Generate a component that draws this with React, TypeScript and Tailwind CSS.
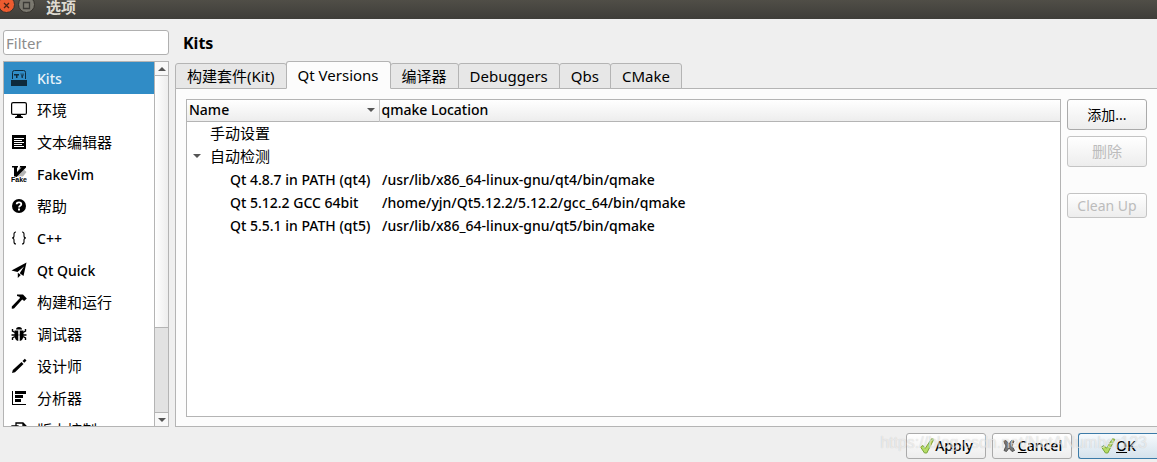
import { useState } from "react";
import type { ReactNode } from "react";

const latin = "font-['Noto_Sans','Noto_Sans_CJK_SC',sans-serif]";

function Icon({ children }: { children: ReactNode }) {
  return (
    <svg viewBox="0 0 16 16" className="size-4 shrink-0" fill="currentColor" aria-hidden="true">
      {children}
    </svg>
  );
}

const categories: { label: string; cjk?: boolean; icon: ReactNode }[] = [
  {
    label: "Kits",
    icon: (
      <>
        <path d="M1.500 9V2.500Q1.500 .5 3.500 .5h9q2 0 2 2V9" fill="none" stroke="currentColor" />
        <path d="M0 10h16v6H0zM3 4h5v1.500H6.500V8H5V5.500H3zM9.500 3.500h1v2h1v-2h1v2l-.7 1V8h-1.200V7z" />
      </>
    ),
  },
  {
    label: "环境",
    cjk: true,
    icon: (
      <>
        <rect x=".6" y=".6" width="14.800" height="11.800" rx="1.500" fill="none" stroke="currentColor" strokeWidth="1.200" />
        <path d="M6 13h4v1l2 1v1H4v-1l2-1z" />
      </>
    ),
  },
  {
    label: "文本编辑器",
    cjk: true,
    icon: (
      <>
        <path d="M1 1h14v14H1z" />
        <path d="M3 4.500h10M3 6.500h8M3 8.500h10M3 10.500h8M3 12.500h10" stroke="white" />
      </>
    ),
  },
  {
    label: "FakeVim",
    icon: (
      <>
        <path d="M9 0 15.500 6 12 10.500H5z" fill="#b5b5b5" />
        <path d="M1 0h6v1.500H6V6l4.500-4.500H9V0h6v1.500L5.500 11H3V1.500H1z" />
        <text
          x="8"
          y="16"
          fontSize="7"
          textAnchor="middle"
          className="font-['Liberation_Sans',sans-serif] font-bold"
          stroke="white"
          strokeWidth="1"
          paintOrder="stroke"
        >
          Fake
        </text>
      </>
    ),
  },
  {
    label: "帮助",
    cjk: true,
    icon: (
      <>
        <circle cx="8" cy="8" r="7" />
        <path
          d="M5.700 6.300Q5.700 4.300 8 4.300t2.300 1.900C10.300 7.800 8 7.600 8 9.500"
          fill="none"
          stroke="white"
          strokeWidth="1.800"
        />
        <path d="M7 10.500h2v2H7z" fill="white" />
      </>
    ),
  },
  {
    label: "C++",
    icon: (
      <path
        d="M5 2Q3 2 3 4v2q0 2-2 2 2 0 2 2v2q0 2 2 2M11 2q2 0 2 2v2q0 2 2 2-2 0-2 2v2q0 2-2 2"
        fill="none"
        stroke="currentColor"
        strokeWidth="1.100"
      />
    ),
  },
  {
    label: "Qt Quick",
    icon: <path d="M15.500.5 12.500 14 8.700 11.200 13 4.500 6.500 10 .5 8.500zM6.800 10.800l3 2.200-3 3z" />,
  },
  {
    label: "构建和运行",
    cjk: true,
    icon: <path d="M6 .5h6l3.800 4-2.600 2.500-2-1.500L3 14.500.8 14.800.8 12.500 9 4 8.500 2.800 6 2z" />,
  },
  {
    label: "调试器",
    cjk: true,
    icon: (
      <>
        <path d="M5 3.500Q5 1 8 1t3 2.500z" />
        <path d="M3.500 4.500h4V15Q3.500 14.500 3.500 9zM8.500 4.500h4V9q0 5.500-4 6z" />
        <path
          d="M1.500 3v2l2.500 1.500M14.500 3v2L12 6.500M.5 9h15M1.500 14v-2L4 10.500M14.500 14v-2L12 10.500"
          fill="none"
          stroke="currentColor"
          strokeWidth="1.400"
        />
        <path d="M8 4.500V15" stroke="white" />
      </>
    ),
  },
  {
    label: "设计师",
    cjk: true,
    icon: <path d="M1 15l.8-3L10.500 4l2 2L4 14.300zM11.500 3 13.800.8 15.500 2.500 13.300 4.800z" />,
  },
  {
    label: "分析器",
    cjk: true,
    icon: <path d="M1 1h1v13h13v1H1zM4 1h11v3H4zM4 5h8v3H4zM4 9h6v3H4z" />,
  },
  {
    label: "版本控制",
    cjk: true,
    icon: (
      <path d="M5 5V1h7l3 3v8h-4M12 1v3h3M1 15V4h6l3 3v8zM7 4v3h3" fill="none" stroke="currentColor" strokeWidth="1.300" />
    ),
  },
];

const tabs = ["构建套件(Kit)", "Qt Versions", "编译器", "Debuggers", "Qbs", "CMake"];

const versions = [
  { name: "Qt 4.8.7 in PATH (qt4)", path: "/usr/lib/x86_64-linux-gnu/qt4/bin/qmake" },
  { name: "Qt 5.12.2 GCC 64bit", path: "/home/yjn/Qt5.12.2/5.12.2/gcc_64/bin/qmake" },
  { name: "Qt 5.5.1 in PATH (qt5)", path: "/usr/lib/x86_64-linux-gnu/qt5/bin/qmake" },
];

function Arrow({ up }: { up?: boolean }) {
  return (
    <svg viewBox="0 0 8 4" className="h-1 w-2 shrink-0" fill="#555" aria-hidden="true">
      <path d={up ? "M0 4 4 0l4 4z" : "M0 0h8L4 4z"} />
    </svg>
  );
}

function Check() {
  return (
    <svg viewBox="0 0 16 16" className="size-4" aria-hidden="true">
      <path d="M1.500 9 4 7.500l2.300 2.800L12.500.8l2.300.5L7.800 15H5.500z" fill="#b4dc66" stroke="#7ba53c" />
    </svg>
  );
}

function Cross() {
  return (
    <svg viewBox="0 0 14 14" className="mr-0.5 size-3.5" aria-hidden="true">
      <path
        d="M1.500 2 4 1.500 7 5l2.500-3.500 2.500.5-2 5 2.500 4.500-2.500 1L7 9l-2.500 3.500-2.500-1L4 7z"
        fill="#777"
        stroke="#555"
      />
    </svg>
  );
}

function SideButton({ children, disabled }: { children: ReactNode; disabled?: boolean }) {
  return (
    <button
      type="button"
      disabled={disabled}
      className="w-full rounded-[3px] border border-[#aaa] bg-linear-to-b from-white to-[#ededed] leading-[23px] disabled:border-[#c4c4c4] disabled:text-[#bcbcbc]"
    >
      {children}
    </button>
  );
}

export default function App() {
  const [category, setCategory] = useState("Kits");
  const [tab, setTab] = useState("Qt Versions");
  const [filter, setFilter] = useState("");

  return (
    <div className={`flex h-screen flex-col overflow-hidden bg-[#efefef] text-sm text-black ${latin}`}>
      {/* title bar */}
      <header className="flex h-[19px] shrink-0 items-start gap-[3px] overflow-hidden bg-linear-to-b from-[#504e47] to-[#3e3d39] text-[#dfdbd2]">
        <button type="button" aria-label="Close" className="-ml-0.5">
          <svg viewBox="0 0 17 17" className="-mt-1 size-[17px]">
            <circle cx="8.500" cy="8.500" r="8" fill="#ed5b2f" stroke="#34312c" />
            <path d="m6 7 5 5M11 7l-5 5" stroke="#4a2415" strokeWidth="1.300" />
          </svg>
        </button>
        <button type="button" aria-label="Maximize">
          <svg viewBox="0 0 17 17" className="-mt-1 size-[17px]">
            <circle cx="8.500" cy="8.500" r="8" fill="#7b7970" stroke="#34312c" />
            <path d="M5.500 6.500h6v6h-6z" fill="none" stroke="#3c3b37" strokeWidth="1.300" />
          </svg>
        </button>
        <h1 className="ml-2 text-[15px] leading-[14px] font-bold">选项</h1>
      </header>

      <div className="flex min-h-0 flex-1 gap-1.5 pt-2.5 pl-[3px]">
        <aside className="flex w-[166px] shrink-0 flex-col gap-1.5 pt-px">
          <input
            type="text"
            aria-label="Filter"
            placeholder="Filter"
            value={filter}
            onChange={(e) => setFilter(e.target.value)}
            className="h-[25px] shrink-0 rounded-[3px] border border-[#b0b0b0] bg-white px-0.5 text-[15px] outline-none placeholder:text-[#8c8c8c]"
          />
          <div className="flex min-h-0 flex-1 border border-[#b4b4b4] bg-white">
            <nav className="min-w-0 flex-1 overflow-hidden">
              {categories.map((c) => (
                <button
                  key={c.label}
                  type="button"
                  onClick={() => setCategory(c.label)}
                  className={`flex h-8 w-full items-center gap-2.5 pl-[7px] text-left ${
                    c.label === category ? "bg-[#308cc6] text-[#0e2a3c]" : ""
                  }`}
                >
                  <Icon>{c.icon}</Icon>
                  <span
                    className={`pt-0.5 ${c.cjk ? "text-[15px]" : "font-medium"} ${c.label === category ? "text-[#e8f3fa]" : ""}`}
                  >
                    {c.label}
                  </span>
                </button>
              ))}
            </nav>
            <div className="flex w-3.5 shrink-0 flex-col border-l border-[#b4b4b4] bg-[#e2e2e2]">
              <div className="flex h-3.5 items-center justify-center border-b border-[#b4b4b4] bg-[#f8f8f8]">
                <Arrow up />
              </div>
              <div className="flex-[3] border-b border-[#b4b4b4] bg-linear-to-r from-white to-[#ededed]" />
              <div className="flex-1" />
              <div className="flex h-3.5 items-center justify-center border-t border-[#b4b4b4] bg-[#f8f8f8]">
                <Arrow />
              </div>
            </div>
          </div>
        </aside>

        <main className="flex min-w-0 flex-1 flex-col">
          <h2 className="h-8 shrink-0 pl-2 text-base leading-7 font-bold">Kits</h2>
          <div role="tablist" className="z-10 -mb-px flex shrink-0 items-end">
            {tabs.map((t) => (
              <button
                key={t}
                role="tab"
                type="button"
                aria-selected={t === tab}
                onClick={() => setTab(t)}
                className={`-mr-px rounded-t-[3px] border border-[#b4b4b4] px-[11px] text-[15px] leading-[25px] ${
                  t === tab ? "z-10 h-7 border-b-[#fcfcfc] bg-[#fcfcfc]" : "h-[26px] bg-[#e7e7e7]"
                }`}
              >
                {t}
              </button>
            ))}
          </div>
          <div className="flex min-h-0 flex-1 gap-1.5 border border-r-0 border-[#b4b4b4] bg-[#fcfcfc] p-2.5 pb-[9px]">
            <div className="min-w-0 flex-1 border border-[#b4b4b4] bg-white">
              <table className="w-full table-fixed border-collapse">
                <thead className="bg-linear-to-b from-white to-[#ededed]">
                  <tr className="h-[21px] border-b border-[#b4b4b4] text-left leading-5">
                    <th className="w-48 border-r border-[#c4c4c4] px-0.5 font-medium">
                      <span className="flex items-center justify-between pr-0.5">
                        Name <Arrow />
                      </span>
                    </th>
                    <th className="px-0.5 font-medium">qmake Location</th>
                  </tr>
                </thead>
                <tbody className="leading-[23px] whitespace-nowrap">
                  <tr>
                    <td className="pl-[23px] text-[15px]">手动设置</td>
                    <td />
                  </tr>
                  <tr>
                    <td className="text-[15px]">
                      <span className="flex items-center gap-[9px] pl-1.5">
                        <Arrow />
                        自动检测
                      </span>
                    </td>
                    <td />
                  </tr>
                  {versions.map((v) => (
                    <tr key={v.name} className="font-medium">
                      <td className="pl-[43px]">{v.name}</td>
                      <td className="pl-[3px]">{v.path}</td>
                    </tr>
                  ))}
                </tbody>
              </table>
            </div>
            <div className="flex w-20 shrink-0 flex-col gap-1.5 pr-0">
              <SideButton>
                <span className="block py-[3px]">添加...</span>
              </SideButton>
              <SideButton disabled>
                <span className="block py-[3px] text-[15px]">删除</span>
              </SideButton>
              <div className="h-3.5" />
              <SideButton disabled>Clean Up</SideButton>
            </div>
          </div>
        </main>
      </div>

      <footer className="relative flex h-[35px] shrink-0 items-start justify-end gap-1.5 pt-1.5">
        <button
          type="button"
          className="flex h-[26px] w-20 items-center justify-center rounded-[3px] border border-[#aaa] bg-linear-to-b from-white to-[#ededed] font-medium"
        >
          <Check />
          Apply
        </button>
        <button
          type="button"
          className="flex h-[26px] w-20 items-center justify-center rounded-[3px] border border-[#aaa] bg-linear-to-b from-white to-[#ededed] font-medium"
        >
          <Cross />
          <span>
            <u>C</u>ancel
          </span>
        </button>
        <button
          type="button"
          className="flex h-[26px] w-[79px] items-center justify-center rounded-l-[3px] border border-r-0 border-[#3c7ba8] bg-linear-to-b from-[#f6fafd] to-[#d5e2ec] font-medium"
        >
          <Check />
          <span>
            <u>O</u>K
          </span>
        </button>
        <span className="pointer-events-none absolute top-1 right-2.5 font-['Liberation_Sans',sans-serif] text-base text-white/60 [text-shadow:0_0_1px_#0003]">
          https://blog.csdn.net/NotANumber123
        </span>
      </footer>
    </div>
  );
}
